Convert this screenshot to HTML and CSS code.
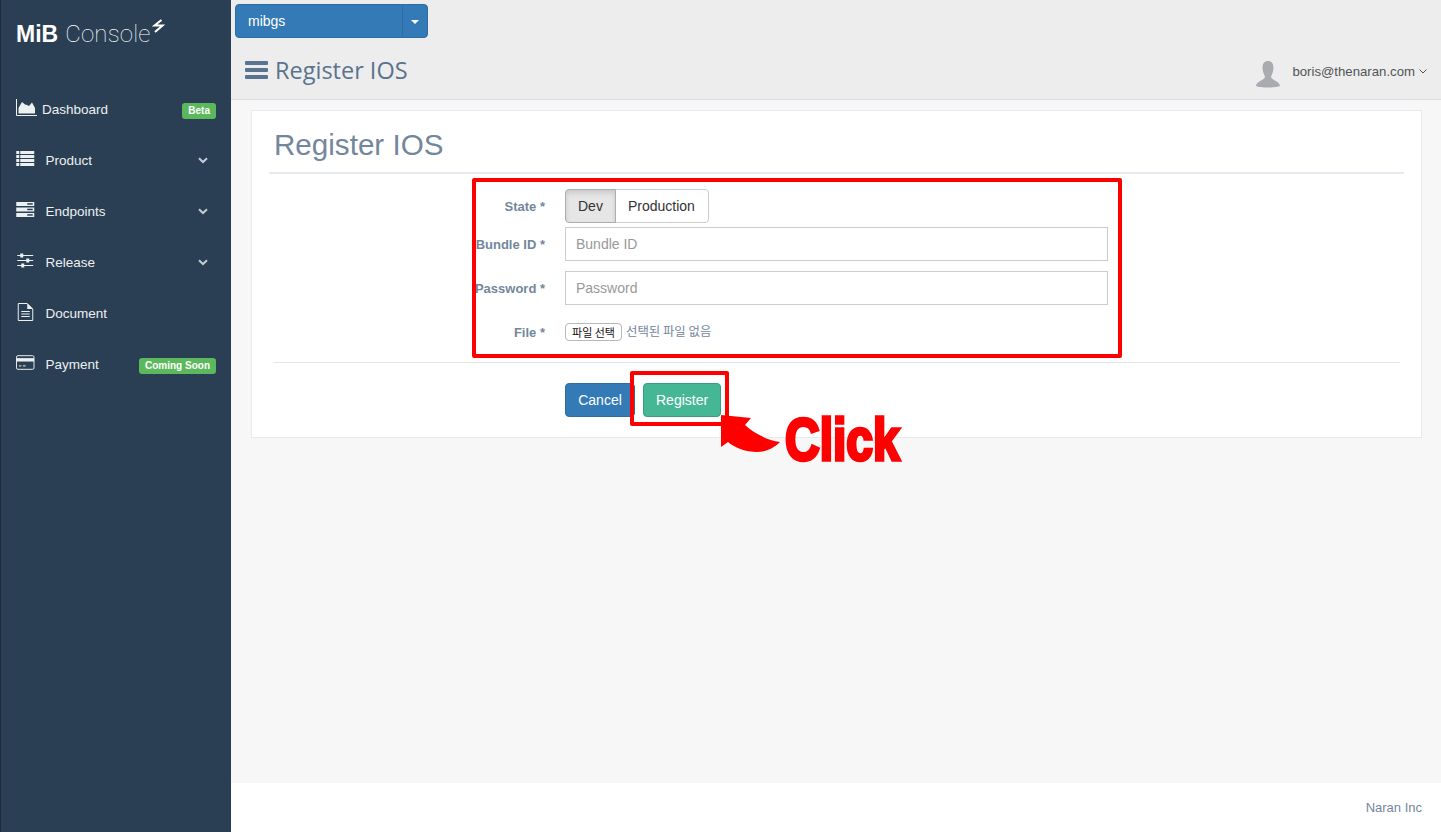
FILE: index.html
```html
<!DOCTYPE html>
<html lang="en">
  <head>
    <meta charset="UTF-8" />
    <title>Register IOS</title>
    <link rel="stylesheet" href="styles.css">
  </head>
  <body>
    <div class="layout">
      <aside class="sidebar">
        <div class="logo">
          <span class="logo-mib">MiB</span><span class="logo-console">Console</span>
          <svg class="logo-bolt" width="13" height="14" viewBox="0 0 13 14"><path d="M9.5 1 L2.5 6.5 H10.5 L3 13" fill="none" stroke="#fff" stroke-width="2"/></svg>
        </div>
        <nav class="menu">
          <a class="menu-item menu-first">
            <svg class="menu-icon" width="21" height="17" viewBox="0 0 21 17"><path d="M0.5 0 V16.5 H21" fill="none" stroke="#ecf0f1" stroke-width="1"/><path d="M2.5 14.5 V9 L6 3 L9 5.5 L11 6 L13 7 L16 3.5 L19 9 V14.5 Z" fill="#ecf0f1"/></svg>
            <span class="menu-label menu-label-tight">Dashboard</span>
            <span class="badge badge-beta">Beta</span>
          </a>
          <a class="menu-item">
            <svg class="menu-icon" width="18" height="15" viewBox="0 0 18 15"><g fill="#ecf0f1"><rect x="0" y="0" width="3" height="3"/><rect x="4" y="0" width="14" height="3"/><rect x="0" y="4" width="3" height="3"/><rect x="4" y="4" width="14" height="3"/><rect x="0" y="8" width="3" height="3"/><rect x="4" y="8" width="14" height="3"/><rect x="0" y="12" width="3" height="3"/><rect x="4" y="12" width="14" height="3"/></g></svg>
            <span class="menu-label">Product</span>
            <svg class="menu-caret" width="10" height="7" viewBox="0 0 10 7"><path d="M1 1.2 L5 5 L9 1.2" fill="none" stroke="#c4ccd3" stroke-width="2"/></svg>
          </a>
          <a class="menu-item">
            <svg class="menu-icon" width="18" height="15" viewBox="0 0 18 15"><g fill="#ecf0f1"><rect x="0" y="0" width="18" height="4"/><rect x="0" y="5.5" width="18" height="4"/><rect x="0" y="11" width="18" height="4"/></g><g fill="#2a3f54"><rect x="11" y="1.2" width="5.5" height="1.5"/><rect x="11" y="6.7" width="5.5" height="1.5"/><rect x="11" y="12.2" width="5.5" height="1.5"/></g></svg>
            <span class="menu-label">Endpoints</span>
            <svg class="menu-caret" width="10" height="7" viewBox="0 0 10 7"><path d="M1 1.2 L5 5 L9 1.2" fill="none" stroke="#c4ccd3" stroke-width="2"/></svg>
          </a>
          <a class="menu-item">
            <svg class="menu-icon" width="16" height="15" viewBox="0 0 16 15"><g stroke="#ecf0f1" stroke-width="1"><path d="M0 2.5 H16 M0 7.5 H16 M0 12.5 H16"/></g><g fill="#ecf0f1"><rect x="3" y="0.5" width="3" height="4"/><rect x="9" y="5.5" width="3" height="4"/><rect x="4" y="10.5" width="3" height="4"/></g></svg>
            <span class="menu-label">Release</span>
            <svg class="menu-caret" width="10" height="7" viewBox="0 0 10 7"><path d="M1 1.2 L5 5 L9 1.2" fill="none" stroke="#c4ccd3" stroke-width="2"/></svg>
          </a>
          <a class="menu-item">
            <svg class="menu-icon" width="16" height="18" viewBox="0 0 16 18"><path d="M1 0.5 H10 L15.5 6 V17.5 H1 Z" fill="none" stroke="#ecf0f1"/><path d="M10 0.5 V6 H15.5 Z" fill="#ecf0f1"/><path d="M4 8.5 H12.5 M4 11 H12.5 M4 13.5 H12.5" stroke="#ecf0f1" stroke-width="1.2"/></svg>
            <span class="menu-label">Document</span>
          </a>
          <a class="menu-item">
            <svg class="menu-icon" width="19" height="15" viewBox="0 0 19 15"><rect x="0.5" y="0.5" width="18" height="14" rx="1.5" fill="none" stroke="#ecf0f1"/><rect x="0.5" y="3" width="18" height="3.5" fill="#ecf0f1"/><path d="M3 11 H5.5 M7 11 H10" stroke="#ecf0f1"/></svg>
            <span class="menu-label">Payment</span>
            <span class="badge badge-soon">Coming Soon</span>
          </a>
        </nav>
      </aside>

      <div class="content">
        <header class="topbar">
          <div class="project-select">
            <button class="project-name">mibgs</button>
            <button class="project-caret"><span class="caret"></span></button>
          </div>
          <div class="topbar-row">
            <svg class="burger" width="23" height="18" viewBox="0 0 23 18"><g fill="#5a738e"><rect width="23" height="4" rx="1"/><rect y="7" width="23" height="4" rx="1"/><rect y="14" width="23" height="4" rx="1"/></g></svg>
            <span class="topbar-title">Register IOS</span>
            <div class="user">
              <svg class="avatar" width="24" height="27" viewBox="0 0 24 27"><path d="M12 0 C16 0 17.5 3 17.5 7 C17.5 11 15.5 14 15 16 C15.5 19 24 20.5 24 25 C20 27 4 27 0 25 C0 20.5 8.5 19 9 16 C8.5 14 6.5 11 6.5 7 C6.5 3 8 0 12 0 Z" fill="#a8acb0"/></svg>
              <span class="user-mail">boris@thenaran.com</span>
              <svg width="8" height="5" viewBox="0 0 8 5"><path d="M0.5 0.5 L4 4 L7.5 0.5" fill="none" stroke="#515356"/></svg>
            </div>
          </div>
        </header>

        <main class="main">
          <section class="card">
            <h2 class="card-title">Register IOS</h2>
            <form class="form">
              <div class="form-row form-row-state">
                <label class="form-label">State *</label>
                <div class="btn-group">
                  <span class="toggle toggle-on">Dev</span><span class="toggle">Production</span>
                </div>
              </div>
              <div class="form-row form-row-bundle">
                <label class="form-label">Bundle ID *</label>
                <input class="form-input" type="text" placeholder="Bundle ID" />
              </div>
              <div class="form-row form-row-password">
                <label class="form-label">Password *</label>
                <input class="form-input" type="text" placeholder="Password" />
              </div>
              <div class="form-row form-row-file">
                <label class="form-label">File *</label>
                <span class="file-btn">파일 선택</span>
                <span class="file-none">선택된 파일 없음</span>
              </div>
              <div class="form-actions">
                <button type="button" class="btn btn-blue">Cancel</button>
                <button type="button" class="btn btn-green">Register</button>
              </div>
            </form>
          </section>
        </main>

        <footer class="footer">Naran Inc</footer>
      </div>
    </div>

    <!-- red markup drawn over the screen -->
    <div class="mark mark-form"></div>
    <div class="mark mark-register"></div>
    <svg class="mark-arrow" width="62" height="42" viewBox="0 0 62 42"><path d="M1 -1 L31 2 L25 9 C35 18 47 24 60 26 C54 32 46 36 37 36 C26 36 15 32 8 26 L1 31 Z" fill="#ff0000"/></svg>
    <span class="mark-click">Click</span>
  </body>
</html>
```
FILE: styles.css
```css
* {
  box-sizing: border-box;
}

body {
  margin: 0;
  font-family: "Liberation Sans", Arial, sans-serif;
  font-size: 14px;
  color: #73879c;
  background-color: #f7f7f7;
}

.layout {
  display: flex;
  height: 832px;
  overflow: hidden;
}

/* sidebar */
.sidebar {
  width: 231px;
  flex-shrink: 0;
  background-color: #2a3f54;
  border-left: 1px solid #1f2c38;
}

.logo {
  display: flex;
  align-items: flex-start;
  height: 84px;
  padding: 20px 0 0 15px;
  color: #fff;
}

.logo-mib {
  font-size: 23px;
  font-weight: bold;
  line-height: 28px;
}

.logo-console {
  margin-left: 7px;
  font-family: Roboto, sans-serif;
  font-weight: 100;
  font-size: 24px;
  line-height: 28px;
  letter-spacing: 0.2px;
}

.logo-bolt {
  margin: -1px 0 0 1px;
}

.menu-item {
  display: flex;
  align-items: center;
  height: 51px;
  padding: 0 15px;
  color: #ecf0f1;
  font-size: 13.5px;
}

.menu-icon {
  flex-shrink: 0;
  margin-top: -4px;
}

.menu-label {
  margin-left: 11px;
}

.menu-item .menu-icon + .menu-label {
  flex: 1;
}

.menu-item:nth-child(n + 2) .menu-icon {
  width: 29.5px;
  padding-right: 11px;
}

.menu-item:nth-child(n + 2) .menu-label {
  margin-left: 0;
}

.menu-label-tight {
  margin-left: 5px;
}

.menu-caret {
  margin-right: 8px;
}

.badge {
  margin-top: 2px;
  padding: 0 6px;
  border-radius: 3px;
  background-color: #5cb85c;
  color: #fff;
  font-size: 10px;
  font-weight: bold;
  line-height: 16px;
}

/* top */
.content {
  flex: 1;
  display: flex;
  flex-direction: column;
}

.topbar {
  height: 100px;
  padding: 4px 14px 0 4px;
  background-color: #ededed;
  border-bottom: 1px solid #d9dee4;
}

.project-select {
  display: flex;
  width: 193px;
  height: 34px;
}

.project-select button {
  height: 34px;
  border: 1px solid #2e6da4;
  background-color: #337ab7;
  color: #fff;
  font-family: inherit;
  font-size: 14px;
}

.project-name {
  flex: 1;
  padding: 0 12px;
  text-align: left;
  border-radius: 4px 0 0 4px;
}

.project-caret {
  width: 26px;
  margin-left: -1px;
  padding: 0;
  border-radius: 0 4px 4px 0;
}

.caret {
  display: inline-block;
  border-top: 4px solid #fff;
  border-left: 4px solid transparent;
  border-right: 4px solid transparent;
  vertical-align: middle;
}

.topbar-row {
  display: flex;
  align-items: center;
  height: 48px;
  margin-top: 8px;
  padding-left: 10px;
}

.topbar-title {
  margin-left: 7px;
  font-family: "Open Sans", sans-serif;
  font-size: 23.5px;
  color: #5a738e;
}

.user {
  display: flex;
  align-items: center;
  margin-left: auto;
  margin-top: 2px;
  color: #515356;
  font-size: 13.2px;
}

.avatar {
  margin-top: 6px;
}

.user-mail {
  margin: 0 4px 0 12px;
}

/* main card */
.main {
  flex: 1;
  padding: 10px 19px 0 20px;
}

.card {
  height: 328px;
  padding: 0 17px;
  background-color: #fff;
  border: 1px solid #e6e9ed;
}

.card-title {
  margin: 0;
  height: 63px;
  padding: 16px 0 0 5px;
  border-bottom: 2px solid #e6e9ed;
  font-size: 29.6px;
  font-weight: normal;
  line-height: 36px;
  color: #73879c;
}

.form-row {
  display: flex;
  align-items: center;
}

.form-row-state {
  margin-top: 15px;
}

.form-row-bundle {
  margin-top: 4px;
}

.form-row-password {
  margin-top: 10px;
}

.form-row-file {
  height: 18px;
  margin-top: 18px;
}

.form-label {
  width: 276px;
  margin-right: 20px;
  text-align: right;
  font-size: 13px;
  font-weight: bold;
  color: #73879c;
}

.btn-group {
  display: flex;
}

.toggle {
  height: 34px;
  padding: 0 13px 0 12px;
  border: 1px solid #ccc;
  background-color: #fff;
  color: #333;
  line-height: 32px;
  border-radius: 0 4px 4px 0;
  margin-left: -1px;
}

.toggle-on {
  position: relative;
  margin-left: 0;
  padding: 0 12px;
  background-color: #e6e6e6;
  border-color: #adadad;
  border-radius: 4px 0 0 4px;
  box-shadow: inset 0 3px 5px rgba(0, 0, 0, 0.125);
}

.form-input {
  width: 543px;
  height: 34px;
  padding: 0 10px;
  border: 1px solid #ccc;
  font-family: inherit;
  font-size: 14px;
  color: #555;
}

.form-input::placeholder {
  color: #999;
}

.file-btn {
  width: 57px;
  height: 18px;
  border: 1px solid #b8b8b8;
  border-radius: 4px;
  background-color: #fff;
  color: #111;
  font-family: "Noto Sans CJK KR", sans-serif;
  font-size: 11px;
  line-height: 16px;
  text-align: center;
}

.file-none {
  margin-left: 4px;
  margin-top: -2px;
  font-family: "Noto Sans CJK KR", sans-serif;
  font-size: 12.4px;
}

.form-actions {
  display: flex;
  gap: 8px;
  margin: 21px 4px 0;
  padding: 20px 0 0 292px;
  border-top: 1px solid #e5e5e5;
}

.btn {
  height: 34px;
  padding: 0 12px;
  border: 1px solid;
  border-radius: 4px;
  color: #fff;
  font-family: inherit;
  font-size: 14px;
}

.btn-blue {
  width: 70px;
  background-color: #337ab7;
  border-color: #2e6da4;
}

.btn-green {
  width: 78px;
  background-color: #46b795;
  border-color: #3a9c80;
}

/* footer */
.footer {
  height: 49px;
  padding: 17px 19px 0 0;
  background-color: #fff;
  text-align: right;
  font-size: 13px;
}

/* red markup */
.mark {
  position: absolute;
  border: 4px solid #ff0000;
  border-radius: 2px;
}

.mark-form {
  left: 472px;
  top: 178px;
  width: 650px;
  height: 180px;
}

.mark-register {
  left: 630px;
  top: 371px;
  width: 99px;
  height: 55px;
}

.mark-arrow {
  position: absolute;
  left: 720px;
  top: 416px;
  overflow: visible;
}

.mark-click {
  position: absolute;
  left: 785px;
  top: 409px;
  font-family: "Liberation Sans", sans-serif;
  font-size: 60px;
  font-weight: bold;
  line-height: 62px;
  color: #ff0000;
  -webkit-text-stroke: 3.5px #ff0000;
  transform: scaleX(0.8);
  transform-origin: left top;
}
```
